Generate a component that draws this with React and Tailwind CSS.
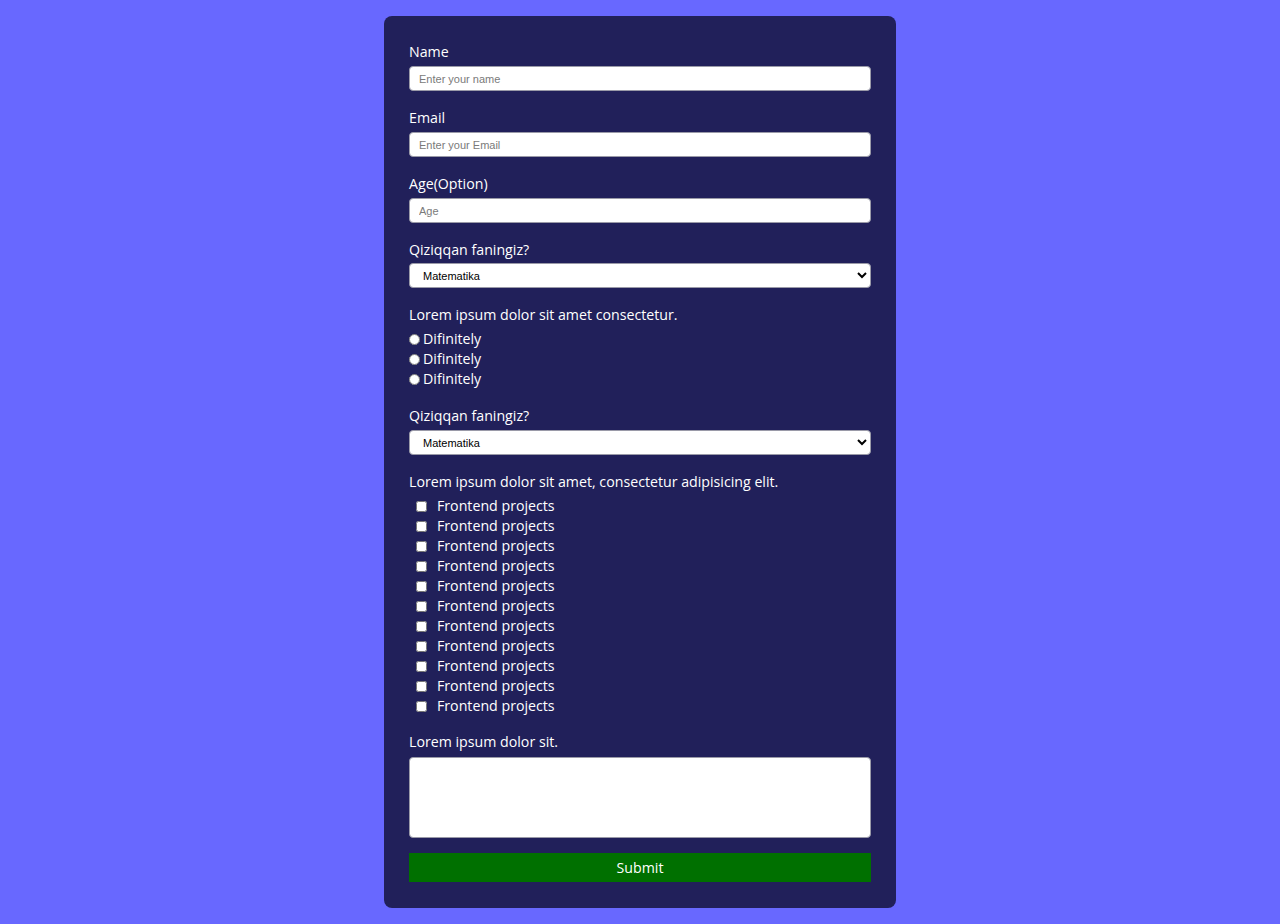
const subjects = ["Matematika", "Fizika", "Ona tili", "Ingliz tili"];

const labelCls = "block text-[14.2px] leading-[22px] text-white";
const inputCls =
  "block w-full h-[25px] px-[9px] bg-white rounded-[4px] border border-[#9a9aa8] text-[11px] text-black placeholder:text-[#7a7a7a] outline-none";
const inputFont = { fontFamily: '"Liberation Sans", Arial, sans-serif' };

function SubjectSelect() {
  return (
    <select className={inputCls + " px-[8px]"} style={inputFont} defaultValue="Matematika">
      {subjects.map((s) => (
        <option key={s}>{s}</option>
      ))}
    </select>
  );
}

export default function App() {
  return (
    <div
      className="min-h-screen bg-[#6868ff] py-4 flex justify-center"
      style={{ fontFamily: '"Open Sans", "Noto Sans", sans-serif' }}
    >
      <form
        className="w-[512px] bg-[#21205a] rounded-[8px] px-[25px] pt-[25px] pb-[26px] text-white"
        onSubmit={(e) => e.preventDefault()}
      >
        <div className="mb-[16px]">
          <label className={labelCls + " mb-[3px]"}>Name</label>
          <input type="text" placeholder="Enter your name" className={inputCls} style={inputFont} />
        </div>
        <div className="mb-[16px]">
          <label className={labelCls + " mb-[3px]"}>Email</label>
          <input type="email" placeholder="Enter your Email" className={inputCls} style={inputFont} />
        </div>
        <div className="mb-[16px]">
          <label className={labelCls + " mb-[3px]"}>Age(Option)</label>
          <input type="number" placeholder="Age" className={inputCls} style={inputFont} />
        </div>
        <div className="mb-[16px]">
          <label className={labelCls + " mb-[2px]"}>Qiziqqan faningiz?</label>
          <SubjectSelect />
        </div>

        <div className="mb-[16px]">
          <p className={labelCls + " mb-[3px]"}>Lorem ipsum dolor sit amet consectetur.</p>
          {[0, 1, 2].map((i) => (
            <label key={i} className="flex items-center gap-[3px] text-[14.2px] leading-[20px]">
              <input type="radio" name="def" className="w-[11px] h-[11px]" />
              Difinitely
            </label>
          ))}
        </div>

        <div className="mb-[16px]">
          <label className={labelCls + " mb-[3px]"}>Qiziqqan faningiz?</label>
          <SubjectSelect />
        </div>

        <div className="mb-[15px]">
          <p className={labelCls + " mb-[3px]"}>
            Lorem ipsum dolor sit amet, consectetur adipisicing elit.
          </p>
          {Array.from({ length: 11 }).map((_, i) => (
            <label key={i} className="flex items-center gap-[10px] pl-[7px] text-[14.2px] leading-[20px]">
              <input type="checkbox" className="w-[11px] h-[11px]" />
              Frontend projects
            </label>
          ))}
        </div>

        <div className="mb-[15px]">
          <p className={labelCls + " mb-[4px]"}>Lorem ipsum dolor sit.</p>
          <textarea className="block w-full h-[81px] bg-white rounded-[4px] border border-[#9a9aa8] resize-none text-black outline-none p-2" />
        </div>

        <button type="submit" className="block w-full h-[29px] bg-[#007000] text-white text-[14.2px]">
          Submit
        </button>
      </form>
    </div>
  );
}
